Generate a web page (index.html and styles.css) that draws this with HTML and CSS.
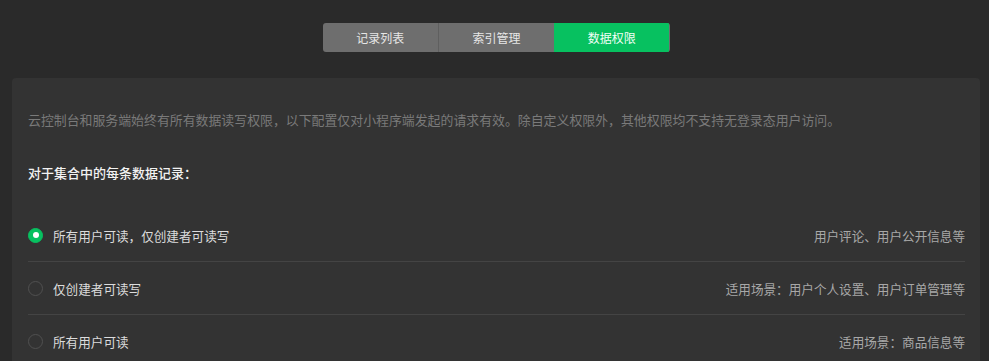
FILE: index.html
```html
<!DOCTYPE html>
<html lang="zh-CN">
<head>
  <meta charset="UTF-8" />
  <title>数据权限</title>
  <link rel="stylesheet" href="styles.css">
</head>
<body>
  <div class="page">
    <nav class="tabs">
      <a href="#" class="tab">记录列表</a>
      <a href="#" class="tab">索引管理</a>
      <a href="#" class="tab active">数据权限</a>
    </nav>

    <section class="panel">
      <p class="desc">云控制台和服务端始终有所有数据读写权限，以下配置仅对小程序端发起的请求有效。除自定义权限外，其他权限均不支持无登录态用户访问。</p>
      <h3 class="subtitle">对于集合中的每条数据记录：</h3>

      <ul class="options">
        <li class="option">
          <span class="radio checked"></span>
          <span class="label">所有用户可读，仅创建者可读写</span>
          <span class="hint">用户评论、用户公开信息等</span>
        </li>
        <li class="option">
          <span class="radio"></span>
          <span class="label">仅创建者可读写</span>
          <span class="hint">适用场景：用户个人设置、用户订单管理等</span>
        </li>
        <li class="option">
          <span class="radio"></span>
          <span class="label">所有用户可读</span>
          <span class="hint">适用场景：商品信息等</span>
        </li>
      </ul>
    </section>
  </div>
</body>
</html>
```

FILE: styles.css
```css
body {
  margin: 0;
  padding: 0;
  background-color: #2a2a2a;
  color: #dcdcdc;
  font-family: 'Noto Sans CJK SC', 'Noto Sans', sans-serif;
  overflow: hidden;
}
.page {
  padding: 23px 9px 0 12px;
}
.tabs {
  display: flex;
  width: 347px;
  height: 29px;
  margin: 0 auto 26px;
  border-radius: 3px;
  overflow: hidden;
  background-color: #6e6e6e;
}
.tab {
  flex: 1;
  display: flex;
  align-items: center;
  justify-content: center;
  color: #e6e6e6;
  font-size: 12px;
  text-decoration: none;
  border-left: 1px solid #5f5f5f;
}
.tab:first-child {
  border-left: none;
}
.tab.active {
  background-color: #07c160;
  border-left: none;
  color: #f0fff6;
}
.panel {
  background-color: #333333;
  border-radius: 4px;
  padding: 32px 15px 0 16px;
  height: 260px;
}
.desc {
  margin: 0;
  font-size: 12.9px;
  line-height: 20px;
  color: #7a7a7a;
}
.subtitle {
  margin: 33px 0 0;
  font-size: 13px;
  line-height: 20px;
  font-weight: 500;
  color: #f2f2f2;
}
.options {
  list-style: none;
  margin: 26px 0 0;
  padding: 0;
}
.option {
  display: flex;
  align-items: center;
  height: 52px;
  border-bottom: 1px solid #444444;
  font-size: 12.6px;
}
.radio {
  width: 15px;
  height: 15px;
  box-sizing: border-box;
  border-radius: 50%;
  border: 1px solid #505050;
  margin-right: 10px;
  position: relative;
}
.radio.checked {
  background-color: #07c160;
  border-color: #07c160;
}
.radio.checked::after {
  content: '';
  position: absolute;
  top: 3.5px;
  left: 3.5px;
  width: 6px;
  height: 6px;
  border-radius: 50%;
  background-color: #ffffff;
}
.label {
  flex: 1;
  color: #dcdcdc;
}
.hint {
  color: #a8a8a8;
}
```
